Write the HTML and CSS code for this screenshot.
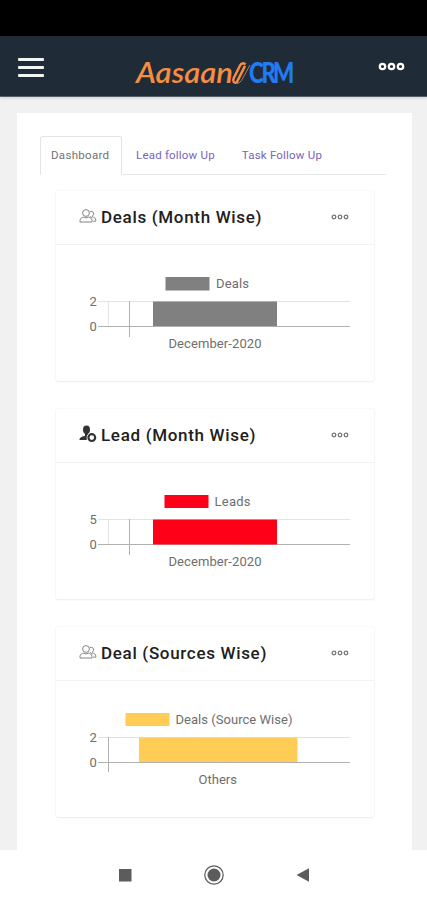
FILE: index.html
```
<!DOCTYPE html>
<html lang="en">

<head>
    <meta charset="UTF-8">
    <meta name="viewport" content="width=device-width, initial-scale=1.0">
    <title>AasaanCRM Dashboard</title>
    <link rel="stylesheet" href="styles.css">
</head>

<body>

    <!-- shared icons -->
    <svg class="icon-defs" width="0" height="0">
        <symbol id="dots" viewBox="0 0 18 6">
            <circle cx="3" cy="3" r="1.8" />
            <circle cx="9" cy="3" r="1.8" />
            <circle cx="15" cy="3" r="1.8" />
        </symbol>
        <symbol id="people" viewBox="0 0 18 16">
            <circle cx="7" cy="5" r="3.4" />
            <path d="M1 14v-1.500c0-2.200 2-3 3.800-3.400 1.400 1 3 1 4.400 0 1.800.4 3.800 1.200 3.800 3.400V14z" />
            <path d="M10.800 3.600c2.800-1 4.200.8 3.600 2.800-.3 1.200-1 1.600-1.200 2.400 2 .5 3.600 1.200 3.600 3.400v1h-2.600M11 8.200l2 2" />
        </symbol>
    </svg>

    <div class="status-bar"></div>

    <header class="navbar">
        <button class="menu-btn" aria-label="Menu">
            <span></span>
            <span></span>
            <span></span>
        </button>
        <svg class="logo" width="164" height="38" viewBox="0 0 164 38">
            <text class="logo-name" x="3" y="30" textLength="97" lengthAdjust="spacingAndGlyphs">Aasaan</text>
            <path class="logo-mark" d="M112.500 11.500c-2-2.200-4.500-1-5.600 1.200l-6.100 12.300c-1.500 3.200.2 5.600 3 4.400l8.200-16.500" />
            <path class="logo-line" d="M104 30.500c2.500-.3 4-2 5.300-4.500L117 12" />
            <text class="logo-crm" transform="translate(116 30) scale(.8 1)" x="0 15.500 30" y="0">CRM</text>
        </svg>
        <button class="more-btn" aria-label="More">
            <svg width="27" height="9"><use href="#dots" /></svg>
        </button>
    </header>

    <main class="panel">
        <ul class="tabs">
            <li class="tab active"><span>Dashboard</span></li>
            <li class="tab"><span>Lead follow Up</span></li>
            <li class="tab"><span>Task Follow Up</span></li>
        </ul>

        <section class="card">
            <div class="card-header">
                <svg class="card-icon" width="18" height="16"><use href="#people" /></svg>
                <h2>Deals (Month Wise)</h2>
                <svg class="card-more" width="20" height="6"><use href="#dots" /></svg>
            </div>
            <svg class="chart" width="318" height="134" viewBox="0 0 318 134">
                <rect class="gray" x="109.500" y="32" width="44" height="13.500" />
                <text x="160" y="43" textLength="33">Deals</text>
                <path class="grid" d="M42 56.500H294M52.500 56v25" />
                <path class="axis" d="M42 81.500H294M73.500 56v36" />
                <rect class="gray" x="97" y="56.500" width="124" height="24.500" />
                <text x="33.500" y="61">2</text>
                <text x="33.500" y="85.500">0</text>
                <text x="112.500" y="102.500" textLength="93">December-2020</text>
            </svg>
        </section>

        <section class="card">
            <div class="card-header">
                <svg class="card-icon solid" width="18" height="18" viewBox="0 0 18 18">
                    <ellipse cx="7.500" cy="4.800" rx="3.500" ry="4.200" />
                    <path d="M6 8h3v3.500L7.500 15H.5c0-2.200 1.500-3 5.500-4.200z" />
                    <circle class="badge-gap" cx="12.800" cy="12.600" r="5.200" />
                    <circle class="badge" cx="12.800" cy="12.600" r="3.400" />
                </svg>
                <h2>Lead (Month Wise)</h2>
                <svg class="card-more" width="20" height="6"><use href="#dots" /></svg>
            </div>
            <svg class="chart" width="318" height="134" viewBox="0 0 318 134">
                <rect class="red" x="108.500" y="32" width="44" height="13" />
                <text x="158.500" y="43" textLength="36">Leads</text>
                <path class="grid" d="M42 56.500H294M52.500 56v25" />
                <path class="axis" d="M42 81.500H294M73.500 56v36" />
                <rect class="red" x="97" y="56.500" width="124" height="25" />
                <text x="33.500" y="61">5</text>
                <text x="33.500" y="85.500">0</text>
                <text x="112.500" y="102.500" textLength="93">December-2020</text>
            </svg>
        </section>

        <section class="card">
            <div class="card-header">
                <svg class="card-icon" width="18" height="16"><use href="#people" /></svg>
                <h2>Deal (Sources Wise)</h2>
                <svg class="card-more" width="20" height="6"><use href="#dots" /></svg>
            </div>
            <svg class="chart" width="318" height="134" viewBox="0 0 318 134">
                <rect class="yellow" x="69.500" y="32" width="44" height="13" />
                <text x="119.500" y="43" textLength="117">Deals (Source Wise)</text>
                <path class="grid" d="M42 56.500H294" />
                <path class="axis" d="M42 81.500H294M52.500 56v35" />
                <rect class="yellow" x="83" y="56.500" width="158.500" height="24.500" />
                <text x="33.500" y="61">2</text>
                <text x="33.500" y="85.500">0</text>
                <text x="142.500" y="102.500" textLength="38.500">Others</text>
            </svg>
        </section>
    </main>

    <nav class="phone-nav">
        <svg width="14" height="14"><rect x="1" y="1" width="12.500" height="12.500" /></svg>
        <svg width="22" height="22">
            <circle class="ring" cx="11" cy="11" r="9.200" />
            <circle cx="11" cy="11" r="6.500" />
        </svg>
        <svg width="14" height="16"><path d="M.5 8L13 1.200v13.600z" /></svg>
    </nav>

</body>

</html>
```
FILE: styles.css
```
* {
    box-sizing: border-box;
}

body {
    margin: 0;
    height: 900px;
    overflow: hidden;
    display: flex;
    flex-direction: column;
    font-family: Roboto, sans-serif;
    background-color: #f1f1f1;
}

button {
    border: none;
    padding: 0;
    background: none;
}

.icon-defs {
    position: absolute;
}

.status-bar {
    height: 36px;
    flex-shrink: 0;
    background-color: #000;
}

.navbar {
    height: 61px;
    flex-shrink: 0;
    display: flex;
    justify-content: space-between;
    align-items: flex-start;
    padding: 17px 22px 0 18px;
    background-color: #1f2c37;
    border-bottom: 1px solid #53606a;
    box-shadow: 0 1px 3px rgba(0, 0, 0, 0.15);
}

.menu-btn {
    width: 26px;
    margin-top: 5px;
    display: flex;
    flex-direction: column;
    gap: 5px;
}

.menu-btn span {
    height: 3px;
    border-radius: 1px;
    background-color: #f4f6f6;
}

.logo {
    margin-left: 7px;
}

.logo-name {
    font-family: Lato, sans-serif;
    font-size: 28px;
    font-style: italic;
    font-weight: 600;
    fill: #f68d42;
}

.logo-crm {
    font-family: Lato, sans-serif;
    font-size: 28px;
    font-weight: 900;
    fill: #217cf4;
}

.logo-mark {
    fill: none;
    stroke: #f68d42;
    stroke-width: 2.5;
}

.logo-line {
    fill: none;
    stroke: #b97850;
    stroke-width: 1;
}

.more-btn {
    margin-top: 9px;
}

.more-btn svg {
    display: block;
    fill: none;
    stroke: #fff;
    stroke-width: 1.5;
}

.panel {
    flex: 1;
    min-height: 0;
    margin: 16px 15px 0 17px;
    padding: 23px 26px 0 23px;
    background-color: #fff;
}

.tabs {
    display: flex;
    height: 39px;
    margin: 0 0 15.5px;
    padding: 0;
    list-style: none;
    border-bottom: 1px solid #e8e8ea;
}

.tab {
    height: 39px;
    padding: 12px 13px 0 14px;
    font-size: 11.5px;
    line-height: 14px;
    letter-spacing: 0.2px;
    white-space: nowrap;
    color: #7764bd;
}

.tab.active {
    width: 82px;
    padding: 11px 0 0 10px;
    border: 1px solid #e4e4e6;
    border-bottom-color: #fff;
    border-radius: 3px 3px 0 0;
    letter-spacing: 0.3px;
    color: #727272;
}

.card {
    width: 318px;
    height: 190px;
    margin: 0 0 28.2px 16px;
    background-color: #fff;
    border-radius: 2px;
    box-shadow: 0 0 2px rgba(0, 0, 0, 0.1), 0 1px 2px rgba(0, 0, 0, 0.05);
}

.card-header {
    height: 54px;
    display: flex;
    align-items: center;
    padding: 0 24px 0 23px;
    border-bottom: 1px solid #f3f3f3;
}

.card-header h2 {
    margin: 0 auto 0 4px;
    font-size: 17px;
    font-weight: 500;
    letter-spacing: 0.68px;
    white-space: nowrap;
    color: #202020;
}

.card-icon {
    margin-bottom: 2px;
    fill: none;
    stroke: #858585;
    stroke-width: 1;
}

.card-icon.solid {
    fill: #333;
    stroke: none;
}

.card-icon .badge-gap {
    fill: #fff;
}

.card-icon .badge {
    fill: #fff;
    stroke: #333;
    stroke-width: 2.2;
}

.card-more {
    fill: none;
    stroke: #777;
    stroke-width: 1.3;
}

.chart {
    display: block;
}

.chart text {
    font-size: 13px;
    fill: #6e6e6e;
}

.grid {
    fill: none;
    stroke: #e3e3e3;
}

.axis {
    fill: none;
    stroke: #b0b0b0;
}

.gray {
    fill: #808080;
}

.red {
    fill: #ff0019;
}

.yellow {
    fill: #ffcd56;
}

.phone-nav {
    height: 50px;
    flex-shrink: 0;
    display: flex;
    justify-content: center;
    align-items: center;
    gap: 71px;
    background-color: #fff;
}

.phone-nav svg {
    fill: #5c5c5c;
}

.phone-nav .ring {
    fill: none;
    stroke: #5c5c5c;
    stroke-width: 1.2;
}
```
